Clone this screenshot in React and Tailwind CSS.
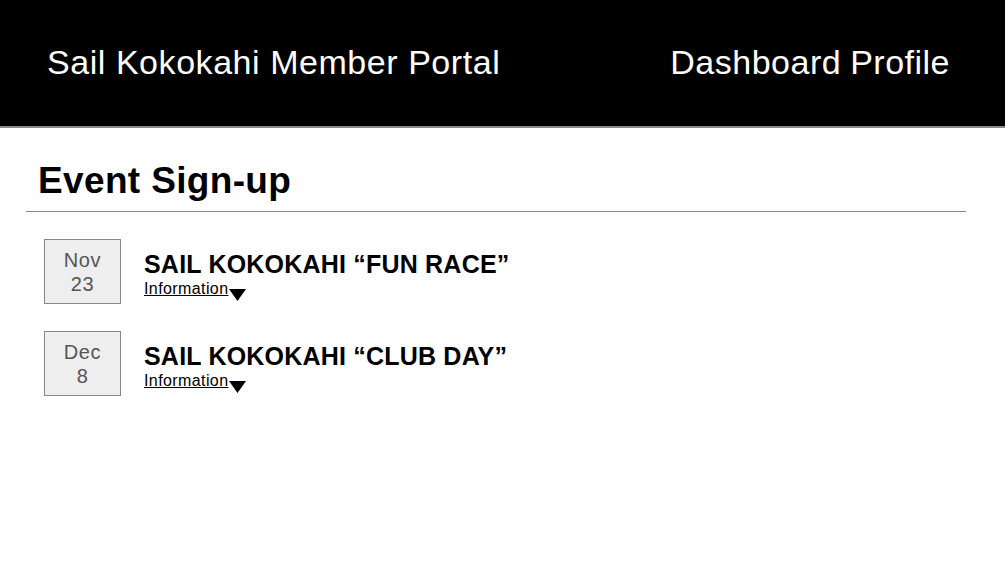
const events = [
  { month: 'Nov', day: '23', title: 'SAIL KOKOKAHI \u201cFUN RACE\u201d' },
  { month: 'Dec', day: '8', title: 'SAIL KOKOKAHI \u201cCLUB DAY\u201d' },
];

export default function App() {
  return (
    <div className="min-h-screen bg-white font-['Liberation_Sans',Arial,sans-serif]">
      <header className="h-[128px] bg-black border-b-2 border-[#888] flex items-center justify-between pl-[47px] pr-[55px] pb-[2px]">
        <h1 className="text-white text-[34px] tracking-[0.55px] leading-none">Sail Kokokahi Member Portal</h1>
        <nav className="text-white text-[34px] tracking-[0.5px] leading-none flex gap-[9px]">
          <a>Dashboard</a>
          <a>Profile</a>
        </nav>
      </header>
      <main className="px-[26px] pr-[39px]">
        <h2 className="text-[37px] tracking-[0.35px] font-bold leading-none pt-[34px] pb-[12px] pl-[12px] border-b border-[#888]">
          Event Sign-up
        </h2>
        <ul className="pt-[27px] pl-[18px] flex flex-col gap-[27px]">
          {events.map((ev) => (
            <li key={ev.month} className="flex items-center gap-[23px]">
              <div className="w-[77px] h-[65px] bg-[#eeeeee] border border-[#888] flex flex-col items-center justify-center text-[#555] text-[20px] tracking-[0.6px] leading-[24px]">
                <span>{ev.month}</span>
                <span>{ev.day}</span>
              </div>
              <div className="flex flex-col pt-[4px]">
                <span className="text-[25px] tracking-[0.2px] font-bold leading-[28px] text-black">{ev.title}</span>
                <span className="mt-[2px] text-[16px] tracking-[0.4px] leading-[18px] flex items-end">
                  <a className="underline">Information</a>
                  <svg width="17" height="12" viewBox="0 0 17 12" className="mb-[-3px] ml-[1px]">
                    <path d="M0 0 H17 L8.5 12 Z" fill="#000" />
                  </svg>
                </span>
              </div>
            </li>
          ))}
        </ul>
      </main>
    </div>
  );
}
